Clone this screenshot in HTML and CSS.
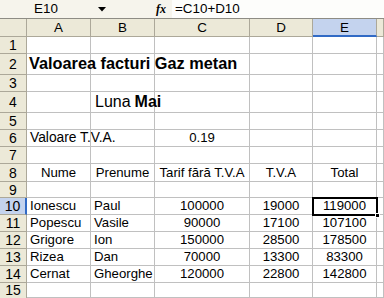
FILE: index.html
```html
<!DOCTYPE html>
<html>
<head>
<meta charset="utf-8">
<link rel="stylesheet" href="styles.css">
</head>
<body>
<div class="fbar">
  <div class="namebox">E10</div>
  <div class="drop"><svg width="8" height="5" viewBox="0 0 8 5"><path d="M0 0H8L4 4.5Z" fill="#000"/></svg></div>
  <div class="fx">fx</div>
  <div class="formula">=C10+D10</div>
</div>
<div class="sheet">
  <div class="hd corner"></div><div class="hd">A</div><div class="hd">B</div><div class="hd">C</div><div class="hd">D</div><div class="hd sel">E</div><div class="hd"></div>

  <div class="rh">1</div><div class="c"></div><div class="c"></div><div class="c"></div><div class="c"></div><div class="c"></div><div class="c"></div>

  <div class="rh">2</div><div class="c title">Valoarea facturi Gaz metan</div><div class="c"></div><div class="c"></div><div class="c"></div><div class="c"></div><div class="c"></div>

  <div class="rh">3</div><div class="c"></div><div class="c"></div><div class="c"></div><div class="c"></div><div class="c"></div><div class="c"></div>

  <div class="rh">4</div><div class="c"></div><div class="c luna">Luna <b>Mai</b></div><div class="c"></div><div class="c"></div><div class="c"></div><div class="c"></div>

  <div class="rh">5</div><div class="c"></div><div class="c"></div><div class="c"></div><div class="c"></div><div class="c"></div><div class="c"></div>

  <div class="rh">6</div><div class="c wide">Valoare T.V.A.</div><div class="c"></div><div class="c ctr">0.19</div><div class="c"></div><div class="c"></div><div class="c"></div>

  <div class="rh">7</div><div class="c"></div><div class="c"></div><div class="c"></div><div class="c"></div><div class="c"></div><div class="c"></div>

  <div class="rh">8</div><div class="c ctr">Nume</div><div class="c ctr">Prenume</div><div class="c ctr">Tarif fără T.V.A</div><div class="c ctr">T.V.A</div><div class="c ctr">Total</div><div class="c"></div>

  <div class="rh">9</div><div class="c"></div><div class="c"></div><div class="c"></div><div class="c"></div><div class="c"></div><div class="c"></div>

  <div class="rh sel">10</div><div class="c">Ionescu</div><div class="c">Paul</div><div class="c ctr">100000</div><div class="c ctr">19000</div><div class="c ctr active">119000<span class="handle"></span></div><div class="c"></div>

  <div class="rh">11</div><div class="c">Popescu</div><div class="c">Vasile</div><div class="c ctr">90000</div><div class="c ctr">17100</div><div class="c ctr">107100</div><div class="c"></div>

  <div class="rh">12</div><div class="c">Grigore</div><div class="c">Ion</div><div class="c ctr">150000</div><div class="c ctr">28500</div><div class="c ctr">178500</div><div class="c"></div>

  <div class="rh">13</div><div class="c">Rizea</div><div class="c">Dan</div><div class="c ctr">70000</div><div class="c ctr">13300</div><div class="c ctr">83300</div><div class="c"></div>

  <div class="rh">14</div><div class="c">Cernat</div><div class="c">Gheorghe</div><div class="c ctr">120000</div><div class="c ctr">22800</div><div class="c ctr">142800</div><div class="c"></div>

  <div class="rh last">15</div><div class="c"></div><div class="c"></div><div class="c"></div><div class="c"></div><div class="c"></div><div class="c"></div>
</div>
</body>
</html>
```
FILE: styles.css
```css
* { box-sizing: border-box; }
html, body { margin: 0; padding: 0; width: 384px; height: 298px; overflow: hidden; background: #fff; }
body { font-family: "Liberation Sans", Arial, sans-serif; font-size: 13.2px; color: #000; }

.fbar {
  display: flex;
  align-items: center;
  height: 19px;
  background: #f6f4ec;
  border-bottom: 1px solid #8e8c84;
  font-size: 13.4px;
}
.namebox { width: 92px; text-align: center; line-height: 18px; }
.drop { width: 20px; display: flex; justify-content: center; align-items: center; height: 18px; }
.fx {
  margin-left: 44px;
  width: 16px;
  font-family: "Liberation Serif", serif;
  font-style: italic;
  font-weight: bold;
  font-size: 12px;
}
.formula {
  flex: 1;
  height: 18px;
  line-height: 18px;
  background: #fdfdfb;
  padding-left: 3px;
}

.sheet {
  display: grid;
  grid-template-columns: 27px 64px 64px 95px 63px 64px 7px;
  grid-template-rows: 18px 17px 21px 17px 21px 17px 17px 17px 18px 16px 17px 17px 17px 17px 17px 15px;
}
.hd {
  background: #ece9d8;
  border-right: 1px solid #aca899;
  border-bottom: 1px solid #aca899;
  text-align: center;
  line-height: 17px;
  font-size: 13.4px;
}
.hd.sel { background: #c4d3ee; border-bottom: 2px solid #316ac5; }
.rh {
  background: #ece9d8;
  border-right: 1px solid #aca899;
  border-bottom: 1px solid #aca899;
  display: flex;
  align-items: center;
  justify-content: center;
  font-size: 14px;
  line-height: 14px;
}
.rh.last { border-bottom: none; align-items: flex-end; padding-bottom: 1px; }
.rh.sel { background: #c4d3ee; border-right: 2px solid #316ac5; }
.c {
  border-right: 1px solid #c0c0c0;
  border-bottom: 1px solid #c0c0c0;
  padding-left: 3px;
  white-space: nowrap;
  display: flex;
  align-items: flex-end;
  padding-bottom: 1px;
  position: relative;
}
.wide { font-size: 13.8px; }
.ctr { justify-content: center; padding-left: 0; }
.title { font-weight: bold; font-size: 16.3px; z-index: 1; padding-left: 2px; }
.luna { font-size: 16px; padding-left: 4px; }
.luna b { margin-left: 4px; }
.active {
  outline: 2px solid #000;
  outline-offset: -1px;
  z-index: 2;
}
.handle {
  position: absolute;
  right: -4px;
  bottom: -4px;
  width: 5px;
  height: 5px;
  background: #000;
  border: 1px solid #fff;
}
```
